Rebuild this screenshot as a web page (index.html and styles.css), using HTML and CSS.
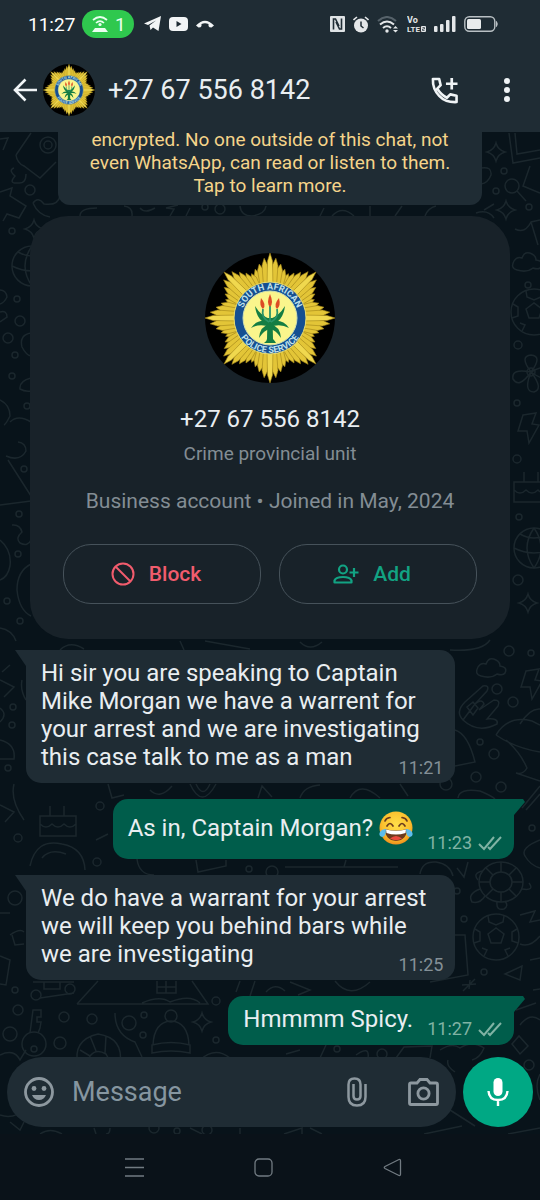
FILE: index.html
```html
<!DOCTYPE html>
<html lang="en">
<head>
<meta charset="utf-8">
<meta name="viewport" content="width=device-width, initial-scale=1">
<title>+27 67 556 8142</title>
<link rel="stylesheet" href="styles.css">
</head>
<body>
<svg class="defs" aria-hidden="true">
  <defs>
    <g id="point" fill="#e3c537" stroke="#a3861a" stroke-width=".6">
      <path transform="rotate(22.5)" d="M-3.400 -30 L-3 -43 L0 -48 L3 -43 L3.400 -30Z"/>
      <path transform="rotate(-16.9)" d="M-3.400 -30 L-2.900 -45 L0 -51 L2.900 -45 L3.400 -30Z"/>
      <path transform="rotate(16.9)" d="M-3.400 -30 L-2.900 -45 L0 -51 L2.900 -45 L3.400 -30Z"/>
      <path transform="rotate(-11.3)" d="M-3.400 -30 L-2.900 -49 L0 -55 L2.900 -49 L3.400 -30Z"/>
      <path transform="rotate(11.3)" d="M-3.400 -30 L-2.900 -49 L0 -55 L2.900 -49 L3.400 -30Z"/>
      <path transform="rotate(-5.6)" d="M-3.400 -30 L-2.800 -53 L0 -60 L2.800 -53 L3.400 -30Z"/>
      <path transform="rotate(5.6)" d="M-3.400 -30 L-2.800 -53 L0 -60 L2.800 -53 L3.400 -30Z"/>
      <path fill="#f0d84e" d="M-3 -30 L-2.500 -57 L0 -65 L2.500 -57 L3 -30Z"/>
    </g>
    <path id="arcTop" d="M-27 9 A28.500 28.500 0 1 1 27 9"/>
    <path id="arcBottom" d="M-35 0 A35 35 0 0 0 35 0"/>
    <symbol id="badge" viewBox="-65 -65 130 130">
      <circle r="65" fill="#000"/>
      <circle r="44" fill="#c9a92a"/>
      <use href="#point"/><use href="#point" transform="rotate(45)"/><use href="#point" transform="rotate(90)"/><use href="#point" transform="rotate(135)"/>
      <use href="#point" transform="rotate(180)"/><use href="#point" transform="rotate(225)"/><use href="#point" transform="rotate(270)"/><use href="#point" transform="rotate(315)"/>
      <circle r="36" fill="#154f91" stroke="#e8dc72" stroke-width="1"/>
      <circle r="27" fill="#faf58c" stroke="#cfe0b0" stroke-width="1"/>
      <g font-family="Roboto, sans-serif" font-weight="700" font-size="9" fill="#bfe0ea" text-anchor="middle">
        <text><textPath href="#arcTop" startOffset="50%">SOUTH AFRICAN</textPath></text>
        <text><textPath href="#arcBottom" startOffset="50%">POLICE SERVICE</textPath></text>
      </g>
      <g fill="#147d43">
        <path d="M-2.500 0 L2.500 0 L3 21 Q5 23 6 25 L-6 25 Q-3 23 -3 21Z"/>
        <path d="M-1 6 Q-13 4 -15 -12 Q-9 -2 0 1Z"/><path d="M1 6 Q13 4 15 -12 Q9 -2 0 1Z"/>
        <path d="M0 4 Q-12 0 -19 10 Q-10 5 0 9Z"/><path d="M0 4 Q12 0 19 10 Q10 5 0 9Z"/>
        <path d="M0 6 Q-10 8 -11 20 Q-6 12 0 11Z"/><path d="M0 6 Q10 8 11 20 Q6 12 0 11Z"/>
      </g>
      <path d="M0 4 V-12 M-1 4 Q-9 0 -7 -9 M1 4 Q9 0 7 -9" fill="none" stroke="#2a9468" stroke-width="1.800"/>
      <g fill="#dc4a24"><path d="M0 -24 Q4 -15 0 -11 Q-4 -15 0 -24Z"/><path d="M-9 -20 Q-3 -13 -7 -9 Q-11 -12 -9 -20Z"/><path d="M9 -20 Q3 -13 7 -9 Q11 -12 9 -20Z"/></g>
    </symbol>
    <symbol id="ticks" viewBox="0 0 24 16"><path d="M1 9 L6 14 L16 2 M10 12 L12 14 L23 2" fill="none" stroke="#80b3a4" stroke-width="2"/></symbol>
    <path id="spark" d="M0 -9 Q2 -2 9 0 Q2 2 0 9 Q-2 2 -9 0 Q-2 -2 0 -9Z"/>
    <path id="bolt" d="M-4 -13 L9 -15 L5 -4 L12 -3 L2 15 L0 3 L-9 3Z"/>
    <path id="cloud" d="M-10 8 Q-17 6 -13 -1 Q-10 -6 -5 -4 Q-2 -12 5 -8 Q9 -6 9 -2 Q17 -1 14 5 Q12 8 6 6 Q0 11 -10 8Z"/>
    <g id="ball"><circle r="23"/><path d="M-8 -3 L0 -9 L8 -3 L5 6 L-5 6Z M-8 -21 L-7 -15 L0 -12 L7 -15 L8 -21 M21 -8 L16 -5 L16 4 L22 6 M-21 -8 L-16 -5 L-16 4 L-22 6 M-12 19 L-9 13 L-14 11 M12 19 L9 13 L14 11"/></g>
    <g id="turtle"><ellipse rx="22" ry="20"/><ellipse rx="11" ry="10"/><path d="M0 -20 V-10 M0 20 V10 M-22 0 H-11 M22 0 H11 M-15 -14 L-8 -7 M15 14 L8 7 M15 -14 L8 -7 M-15 14 L-8 7 M-21 7 Q-34 12 -29 20 Q-21 22 -16 14 M21 7 Q34 9 28 1 M-18 -11 Q-29 -9 -23 -2 M-4 20 Q-5 29 3 27 Q8 24 4 19"/></g>
    <g id="planet"><circle r="20"/><path d="M-20 0 Q0 10 20 0 M-14 -14 Q0 -6 14 -14 M0 -20 Q-14 0 0 20 M0 -20 Q14 0 0 20"/></g>
    <g id="key"><circle cy="12" r="12"/><circle cy="17" r="3"/><path d="M-4 1 L-1 -22 H7 V-15 H3 L3 -10 H7 L6 -4 L4 1"/></g>
    <g id="hat"><path d="M-18 10 Q-17 -13 0 -14 Q17 -13 18 10 M-19 10 Q0 5 19 10 V18 Q0 14 -19 18Z"/><circle cy="-19" r="6"/></g>
    <g id="flower"><path d="M0 0 Q-12 -16 0 -17 Q12 -16 0 0 Q18 -10 19 2 Q17 12 0 0 Q13 17 3 20 Q-8 20 0 0 Q-12 17 -18 7 Q-20 -4 0 0"/><circle r="4"/></g>
    <g id="glass"><circle r="7"/><path d="M5 5 L14 15"/></g>
    <path id="hand" d="M-12 10 Q-20 2 -10 -8 L8 -24 Q15 -25 12 -19 L0 -6 M0 -6 Q7 -12 9 -6 L4 0 L19 -10 Q26 -10 23 -4 L12 9 Q24 8 22 14 Q3 24 -12 10Z M-8 -3 L-2 -8 L3 -2 L-2 5Z"/>
    <g id="cake"><path d="M-18 -4 H18 V16 H-18Z M-18 4 Q-12 10 -6 4 Q0 10 6 4 Q12 10 18 4 M-8 -4 V-14 M6 -4 V-14"/></g>
    <path id="croissant" d="M-20 16 Q-26 -10 0 -16 Q26 -12 22 14 Q12 14 8 4 Q-2 -2 -8 6 Q-10 16 -20 16Z M-18 0 L-8 6 M-8 -14 L-2 1 M8 -14 L7 3"/>
  </defs>
</svg>

<div class="screen">
  <header class="top">
    <div class="status">
      <div class="status-left">
        <span class="clock">11:27</span>
        <span class="hotspot">
          <svg width="18" height="18" viewBox="0 0 18 18" aria-hidden="true"><g fill="none" stroke="#eafff0" stroke-width="1.7"><path d="M2 5 Q9 -1 16 5"/><path d="M5 8 Q9 4 13 8"/></g><circle cx="9" cy="9.5" r="1.6" fill="#eafff0"/><path d="M4 13 H14 L17 17 H1Z" fill="#eafff0"/></svg>
          <span>1</span>
        </span>
        <svg class="ic-telegram" width="17" height="16" viewBox="0 0 17 16" aria-hidden="true"><path d="M0 7.500 L17 0 L14.500 15 L9 11.500 L6.500 14 L5.500 9.500 L12 4.500 L4 9Z" fill="#f2f5f6"/></svg>
        <svg class="ic-video" width="19" height="14" viewBox="0 0 19 14" aria-hidden="true"><rect width="19" height="14" rx="4" fill="#f2f5f6"/><path d="M7.500 4 L12.500 7 L7.500 10Z" fill="#1f2c34"/></svg>
        <svg class="ic-hang" width="18" height="9" viewBox="0 0 18 9" aria-hidden="true"><path d="M0 5.500 Q9 -4 18 5.500 L15.500 7.500 Q13 7.500 12.500 6 V4 Q9 2.500 5.500 4 V6 Q5 7.500 2.500 7.500Z" fill="#f2f5f6"/></svg>
      </div>
      <div class="status-right">
        <svg width="15" height="16" viewBox="0 0 15 16" aria-hidden="true"><rect width="15" height="16" rx="1" fill="#dfe3e5"/><path d="M3.500 13.500 V3 H5.500 L9 10 M11.500 2.500 V13 H9.500 L6 6" fill="none" stroke="#1f2c34" stroke-width="1.600"/></svg>
        <svg width="16" height="17" viewBox="0 0 16 17" aria-hidden="true"><circle cx="8" cy="9.500" r="7" fill="#e4e7e9"/><path d="M.5 4 L4 1 M15.500 4 L12 1" stroke="#e4e7e9" stroke-width="1.600"/><path d="M8 5.500 V10 L10.500 12" fill="none" stroke="#1f2c34" stroke-width="1.500"/></svg>
        <svg width="22" height="17" viewBox="0 0 22 17" aria-hidden="true"><g fill="none" stroke-width="2"><path d="M1 5 Q10 -3 19 5" stroke="#56626a"/><path d="M3 8.500 Q10 2.500 17 8.500 M6 12 Q10 8.500 14 12" stroke="#e4e7e9"/></g><circle cx="10" cy="15" r="1.700" fill="#e4e7e9"/><path d="M16 12.500 L18.500 10 L21 12.500Z M16 14 L18.500 16.500 L21 14Z" fill="#e4e7e9"/></svg>
        <svg width="19" height="17" viewBox="0 0 19 17" role="img" aria-label="VoLTE 2"><g font-family="Roboto, sans-serif" font-weight="700" font-size="9" fill="#e4e7e9"><text x="0" y="7">Vo</text><text x="0" y="16" font-size="8">LTE</text></g><rect x="14" y="10" width="5" height="6" rx="1" fill="#e4e7e9"/><path d="M15.500 11.500 H17.500 V13 H15.500 V14.500 H17.500" fill="none" stroke="#1f2c34" stroke-width=".7"/></svg>
        <svg width="22" height="16" viewBox="0 0 22 16" aria-hidden="true"><g fill="#e4e7e9"><rect y="10" width="3.500" height="6" rx="1"/><rect x="6" y="8" width="3.500" height="8" rx="1"/><rect x="12" y="4" width="3.500" height="12" rx="1"/><rect x="18" width="3.500" height="16" rx="1"/></g></svg>
        <svg width="34" height="16" viewBox="0 0 34 16" aria-hidden="true"><rect x=".8" y=".8" width="30" height="14.400" rx="4.500" fill="none" stroke="#b9c0c4" stroke-width="1.400"/><rect x="3" y="3" width="14" height="10" rx="1.500" fill="#e8ebec"/><path d="M32.500 5.500 Q34 8 32.500 10.500Z" fill="#b9c0c4" stroke="#b9c0c4"/></svg>
      </div>
    </div>
    <div class="bar">
      <button class="icon-btn" aria-label="Back"><svg width="24" height="24" viewBox="0 0 24 24"><path d="M24 12 H2 M12.500 1.500 L2 12 L12.500 22.500" fill="none" stroke="#f0f4f6" stroke-width="2.600"/></svg></button>
      <svg class="avatar-small" role="img" aria-label="Profile photo"><use href="#badge"/></svg>
      <h1 class="title">+27 67 556 8142</h1>
      <button class="icon-btn call" aria-label="Add call"><svg width="27" height="27" viewBox="0 0 28 28" fill="none" stroke="#f0f4f6"><path d="M2 2 H8.500 L10 8.500 L6.500 12 Q10 18 16.500 21.500 L20 18 L26.500 19.500 V26 Q15 26.500 8.500 19.500 Q1.500 12.500 2 2Z" stroke-width="2.700" stroke-linejoin="round"/><path d="M21.500 1 V13 M15.500 7 H27.500" stroke-width="2.800"/></svg></button>
      <button class="icon-btn" aria-label="More options"><svg width="6" height="24" viewBox="0 0 6 24" fill="#f0f4f6"><circle cx="3" cy="3" r="3"/><circle cx="3" cy="12" r="3"/><circle cx="3" cy="21" r="3"/></svg></button>
    </div>
  </header>

  <main class="chat">
    <svg class="wallpaper" viewBox="0 132 540 1002" preserveAspectRatio="xMidYMin slice" aria-hidden="true">
      <path d="M0 139 L8 138 L3 150 M16 155 L31 133 M16 155 Q17 163 24 166 L40 178 L56 162 M14 168 Q8 170 15 176 Q8 184 18 183 Q26 184 26 174 M0 192 L12 188 L10 196 L26 206 L19 218 L7 214 L3 221 M33 203 Q38 196 44 204 Q58 206 60 196 M33 203 Q38 215 50 217"/>
      <circle cx="48" cy="145" r="8"/><circle cx="48" cy="145" r="4"/><circle cx="30" cy="190" r="5"/><circle cx="12" cy="231" r="3"/>
      <use href="#spark" transform="translate(34 229)"/><use href="#planet" transform="translate(32 266)"/>
      <circle cx="17" cy="299" r="3"/><circle cx="20" cy="321" r="5"/><circle cx="8" cy="338" r="5"/><circle cx="15" cy="355" r="3"/><circle cx="12" cy="376" r="3"/><circle cx="27" cy="406" r="3"/><circle cx="24" cy="469" r="3"/><circle cx="19" cy="514" r="3"/><circle cx="18" cy="554" r="3"/><circle cx="7" cy="601" r="3"/><circle cx="20" cy="621" r="3"/>
      <path d="M0 290 Q6 290 7 297 Q4 303 0 304 M0 312 Q7 310 7 317 L0 322 M31 333 Q19 335 22 347 Q26 355 31 356 M31 378 Q19 381 20 389 Q25 392 31 391 M0 400 Q10 405 10 416 Q6 424 4 425 M10 422 Q18 414 31 422 M18 442 Q26 443 26 451 Q20 462 6 456 M8 460 L31 496 M0 505 L31 501 M12 525 Q20 524 22 532 Q15 538 20 543 Q28 547 31 540 M0 540 Q12 550 10 566 Q8 577 0 580 M31 564 Q17 571 17 590 Q19 610 31 616 M0 628 Q12 630 16 641"/>
      <use href="#spark" transform="translate(496 152)"/><circle cx="504" cy="171" r="3"/><use href="#glass" transform="translate(512 186)"/><circle cx="496" cy="191" r="3"/><use href="#spark" transform="translate(506 210)"/><circle cx="529" cy="207" r="3"/>
      <path d="M509 133 L513 163 L540 158 M515 133 L517 154 L540 150 M530 166 L523 186 L540 193 M481 168 Q492 166 491 175 Q488 183 481 184 M515 229 Q525 234 531 222 L540 220 M531 222 L538 245 M484 210 L494 204 M476 213 Q488 209 494 218"/>
      <path d="M80 216 Q80 208 97 208 M124 206 Q133 207 132 216 M140 208 Q145 214 155 208 M170 216 L174 209 L166 208 L178 205 M190 208 L186 216 M240 206 Q241 216 252 216 Q265 214 266 206 M320 216 L324 208 M332 216 Q342 205 354 216 M370 206 V216 M395 216 L402 206 M425 216 Q428 208 436 206"/>
      <circle cx="220" cy="209" r="5"/><circle cx="205" cy="207" r="3"/>
      <use href="#cloud" transform="translate(527 262)"/><use href="#ball" transform="translate(534 312)"/><circle cx="518" cy="345" r="4"/><circle cx="528" cy="285" r="3"/><use href="#flower" transform="translate(531 372)"/><circle cx="517" cy="403" r="3"/><use href="#bolt" transform="translate(527 428)"/><circle cx="517" cy="459" r="4"/><use href="#cake" transform="translate(532 486)"/><circle cx="519" cy="517" r="3"/><use href="#planet" transform="translate(534 548)"/><circle cx="518" cy="580" r="5"/><use href="#spark" transform="translate(528 603)"/><circle cx="509" cy="651" r="5"/><circle cx="531" cy="653" r="3"/>
      <path d="M10 665 L2 672 M0 680 L14 687 L4 697 M0 708 Q8 714 0 722 M26 700 Q20 690 22 680 M0 740 Q16 744 14 759 H0 M450 650 Q482 652 490 640 M180 641 L184 650 M205 641 L250 649 M300 642 Q310 652 322 642 M60 650 Q70 640 84 649"/>
      <circle cx="13" cy="707" r="3"/><circle cx="12" cy="725" r="3"/><circle cx="8" cy="768" r="3"/>
      <use href="#cloud" transform="translate(491 668)"/><use href="#bolt" transform="translate(530 684)"/><circle cx="497" cy="689" r="5"/><circle cx="513" cy="702" r="5"/><use href="#hand" transform="translate(475 710)"/>
      <path d="M496 735 Q508 715 532 721 L540 725 M496 735 Q515 748 540 752 M506 740 Q520 752 527 768 Q523 775 516 773 M516 773 L540 781 M455 730 Q468 734 475 762 L455 766 M520 724 Q530 708 540 709 M458 798 Q459 788 480 791 Q492 796 495 799 M522 808 L540 786 M526 810 L540 794 M540 840 Q520 848 525 856 Q530 865 540 868"/>
      <circle cx="480" cy="742" r="3"/><circle cx="494" cy="754" r="5"/><circle cx="476" cy="777" r="5"/><circle cx="501" cy="787" r="5"/><circle cx="446" cy="784" r="6"/><circle cx="532" cy="828" r="3"/>
      <path d="M14 784 Q10 800 24 820 M108 784 L112 798 L124 795 M150 790 Q160 800 172 786 M190 784 Q202 810 216 784 M196 784 Q203 799 210 784 M258 798 L262 786 L272 797 M300 798 Q304 786 320 785 M350 798 Q360 780 380 798 M400 784 L408 796 M0 805 L14 812 L5 822"/>
      <use href="#cake" transform="translate(58 820)"/><circle cx="100" cy="806" r="4"/><circle cx="18" cy="838" r="4"/><path d="M30 866 Q36 838 62 844 Q84 848 85 870 M42 858 Q50 848 66 854 M96 840 L108 834"/><circle cx="97" cy="862" r="4"/><circle cx="15" cy="898" r="7"/>
      <path d="M137 859 Q139 875 154 875 M196 860 L198 872 L226 866 V860 M285 867 H398 M346 860 L344 867 M420 874 Q422 861 436 862 Q450 864 453 876 M457 868 L464 877 L468 862"/><circle cx="249" cy="869" r="3"/><circle cx="272" cy="872" r="6"/>
      <use href="#turtle" transform="translate(501 882)"/><use href="#ball" transform="translate(496 937)"/><circle cx="464" cy="919" r="3"/><circle cx="457" cy="891" r="3"/>
      <path d="M520 915 L535 911 L530 922 L540 920 M520 944 Q530 948 540 936 M454 935 H465 L468 975 L430 982 M0 913 H10 M10 935 Q20 928 24 932 M12 935 L15 945 L24 944 M0 956 L10 960 L6 985 L0 984 M505 974 L522 966 L520 980Z"/>
      <circle cx="484" cy="972" r="3"/><path d="M470 980 L469 989 M462 985 L476 984 M463 991 L475 979 M530 960 L540 958 M533 990 L540 989"/>
      <g><circle cx="36" cy="995" r="5"/><circle cx="70" cy="989" r="5"/><path d="M33 982 H74 M40 998 L74 993 M44 982 V989 H60 V982"/></g>
      <path d="M77 1004 L98 981 M77 1004 H208 L192 981 M142 1003 Q160 995 170 1002 Q190 994 200 1003 M157 981 V993 H176 V981 M166 981 V993 M157 987 H176 M240 981 L236 992 M255 981 L250 996 M266 992 Q275 982 285 991 M290 982 L310 990 L298 995 M335 981 Q350 1000 370 982"/>
      <circle cx="15" cy="990" r="3"/><circle cx="18" cy="1010" r="5"/><circle cx="64" cy="1017" r="5"/><circle cx="92" cy="1019" r="5"/><circle cx="129" cy="1023" r="7"/><circle cx="144" cy="1015" r="3"/><circle cx="143" cy="1035" r="3"/><circle cx="216" cy="1001" r="4"/><circle cx="216" cy="1040" r="3"/><circle cx="10" cy="1034" r="7"/><circle cx="60" cy="1043" r="6"/>
      <use href="#key" transform="translate(34 1032)"/><use href="#hat" transform="translate(171 1035)"/><use href="#spark" transform="translate(202 1022)"/><use href="#croissant" transform="translate(98 1050)"/>
      <path d="M115 1013 Q115 1035 135 1042 L142 1057 M200 1060 Q215 1046 230 1058 M0 1055 Q14 1048 20 1060 L26 1050 M0 1115 Q14 1120 26 1108 M10 1122 L20 1130 L24 1122 M40 1134 Q50 1127 62 1134 M94 1128 L96 1134 M110 1128 Q110 1134 106 1134 M190 1128 L202 1134 M240 1128 V1134 M310 1128 L322 1134 M284 1134 L302 1128 L302 1134 M424 1134 L462 1126 M508 1134 L540 1128 M450 1110 L475 1126"/>
      <circle cx="154" cy="1128" r="5"/><circle cx="177" cy="1131" r="3"/><circle cx="207" cy="1130" r="5"/>
      <path d="M286 1054 L300 1050 M320 1058 L326 1045 M356 1055 Q370 1045 368 1058 M396 1058 L404 1047 L432 1046 L430 1058 M440 1050 Q452 1042 460 1048 Q472 1040 484 1048 Q480 1058 472 1060 M455 1072 Q446 1066 448 1060 M512 1044 L519 1036 L528 1046 L520 1054Z M540 1074 Q534 1085 540 1100"/><circle cx="337" cy="1049" r="3"/><circle cx="382" cy="1054" r="5"/><circle cx="529" cy="1065" r="5"/><path d="M516 1010 L536 1003 M520 1025 Q530 1012 540 1020"/>
    </svg>

    <p class="notice">encrypted. No one outside of this chat, not even WhatsApp, can read or listen to them. Tap to learn more.</p>

    <section class="card">
      <svg class="avatar-large" role="img" aria-label="South African Police Service badge"><use href="#badge"/></svg>
      <h2 class="card-name">+27 67 556 8142</h2>
      <p class="card-role">Crime provincial unit</p>
      <p class="card-info">Business account • Joined in May, 2024</p>
      <div class="card-actions">
        <button class="pill block"><svg width="24" height="24" viewBox="0 0 24 24" fill="none" stroke="currentColor" stroke-width="2"><circle cx="12" cy="12" r="10.500"/><path d="M4.500 4.500 L19.500 19.500"/></svg>Block</button>
        <button class="pill add"><svg width="26" height="20" viewBox="0 0 26 20" fill="none" stroke="currentColor" stroke-width="2.200"><circle cx="10" cy="5.500" r="4"/><path d="M1.500 18.500 V16.500 Q3 13 10 13 Q17 13 18.500 16.500 V18.500Z" stroke-linejoin="round"/><path d="M21 4 V13 M16.500 8.500 H25.500"/></svg>Add</button>
      </div>
    </section>

    <div class="messages">
      <article class="msg in wide">
        <p>Hi sir you are speaking to Captain<br>Mike Morgan we have a warrent for<br>your arrest and we are investigating<br>this case talk to me as a man</p>
        <div class="meta"><time>11:21</time></div>
      </article>
      <article class="msg out">
        <p class="with-emoji">As in, Captain Morgan?
          <svg width="34" height="34" viewBox="0 0 34 34" role="img" aria-label="Face with tears of joy"><defs><radialGradient id="face" cx="50%" cy="40%" r="60%"><stop offset="0" stop-color="#ffdf4a"/><stop offset=".7" stop-color="#fbc02d"/><stop offset="1" stop-color="#ee8f1c"/></radialGradient></defs><circle cx="17" cy="17" r="16.500" fill="url(#face)"/><path d="M6 18 Q17 21 28 18 Q28 29 17 30 Q6 29 6 18Z" fill="#6b3a1d"/><path d="M7 18.500 Q17 21 27 18.500 L26.500 22 Q17 25 7.500 22Z" fill="#fff"/><path d="M11 27.500 Q17 22.500 23 27.500 Q17 31 11 27.500Z" fill="#ea4a3d"/><path d="M8 15 Q11 10 14 15 M20 15 Q23 10 26 15 M6 10 Q7 7 11 6.500 M28 10 Q27 7 23 6.500" fill="none" stroke="#6b3a1d" stroke-width="1.700" stroke-linecap="round"/><path d="M7 18 Q7 26 3 26 Q-1 25 1 21 Q3 18 7 18Z M27 18 Q27 26 31 26 Q35 25 33 21 Q31 18 27 18Z" fill="#5dbcec"/></svg></p>
        <div class="meta"><time>11:23</time><svg width="24" height="16" role="img" aria-label="Delivered"><use href="#ticks"/></svg></div>
      </article>
      <article class="msg in wide">
        <p>We do have a warrant for your arrest<br>we will keep you behind bars while<br>we are investigating</p>
        <div class="meta"><time>11:25</time></div>
      </article>
      <article class="msg out">
        <p>Hmmmm Spicy.</p>
        <div class="meta"><time>11:27</time><svg width="24" height="16" role="img" aria-label="Delivered"><use href="#ticks"/></svg></div>
      </article>
    </div>

    <form class="composer">
      <div class="field">
        <button type="button" class="icon-btn" aria-label="Emoji"><svg width="30" height="30" viewBox="0 0 30 30"><circle cx="15" cy="15" r="13.500" fill="none" stroke="#8d989f" stroke-width="2.800"/><circle cx="10" cy="11.500" r="2.400" fill="#8d989f"/><circle cx="20" cy="11.500" r="2.400" fill="#8d989f"/><path d="M8 18 H22 Q20 23 15 23 Q10 23 8 18Z" fill="#8d989f"/></svg></button>
        <input type="text" placeholder="Message" aria-label="Message">
        <button type="button" class="icon-btn" aria-label="Attach"><svg width="20" height="30" viewBox="0 0 20 30"><path d="M18.500 7 V20 Q18.500 28.500 10 28.500 Q1.500 28.500 1.500 20 V7.500 Q1.500 1.500 7.500 1.500 Q13.500 1.500 13.500 7.500 V19 Q13.500 22.500 10 22.500 Q6.500 22.500 6.500 19 V7" fill="none" stroke="#8d989f" stroke-width="2.500"/></svg></button>
        <button type="button" class="icon-btn camera" aria-label="Camera"><svg width="31" height="28" viewBox="0 0 31 28" fill="none" stroke="#8d989f" stroke-width="2.800"><path d="M3 5 H9 L12 1.500 H19 L22 5 H28 Q29.500 5 29.500 6.500 V25 Q29.500 26.500 28 26.500 H3 Q1.500 26.500 1.500 25 V6.500 Q1.500 5 3 5Z"/><circle cx="15.500" cy="15.500" r="5.600"/></svg></button>
      </div>
      <button type="button" class="mic" aria-label="Record voice message"><svg width="22" height="30" viewBox="0 0 22 30"><rect x="6.500" y="1" width="9" height="18" rx="4.500" fill="#fff"/><path d="M1.500 14 Q2 23 11 23 Q20 23 20.500 14 M11 23 V29" fill="none" stroke="#fff" stroke-width="2.400"/></svg></button>
    </form>
  </main>

  <nav class="sysnav">
    <button aria-label="Recent apps"><svg width="19" height="19" viewBox="0 0 19 19"><path d="M0 1 H19 M0 9.500 H19 M0 18 H19" stroke="#727b82" stroke-width="1.300"/></svg></button>
    <button aria-label="Home"><svg width="19" height="19" viewBox="0 0 19 19"><rect x="1" y="1" width="17" height="17" rx="4" fill="none" stroke="#727b82" stroke-width="1.300"/></svg></button>
    <button aria-label="Back"><svg width="19" height="19" viewBox="0 0 19 19"><path d="M16 1.500 Q17.500 1 17.500 3 V16 Q17.500 18 16 17.500 L2 10.500 Q.5 9.500 2 8.500Z" fill="none" stroke="#727b82" stroke-width="1.300"/></svg></button>
  </nav>
</div>
</body>
</html>
```

FILE: styles.css
```css
* { box-sizing: border-box; }

body {
  margin: 0;
  background: #0a1219;
  color: #e9eef1;
  font-family: Roboto, "Noto Sans", sans-serif;
}

h1, h2, p { margin: 0; font-weight: 400; }
svg { display: block; flex: none; }
button { border: 0; background: none; padding: 0; font: inherit; color: inherit; cursor: pointer; }

.defs { position: absolute; width: 0; height: 0; }

.screen { display: flex; flex-direction: column; min-height: 100vh; }

/* Header */
.top { background: #1f2c34; position: relative; z-index: 1; }

.status {
  display: flex;
  justify-content: space-between;
  align-items: center;
  height: 48px;
  padding: 0 42px 0 28px;
}
.status-left, .status-right { display: flex; align-items: center; }
.status-right { gap: 8px; }
.clock { font-size: 19px; color: #fff; margin-right: 7px; }
.hotspot {
  display: flex;
  align-items: center;
  justify-content: center;
  gap: 6px;
  width: 52px;
  height: 28px;
  border-radius: 14px;
  background: #2fc84e;
  color: #eafff0;
  font-size: 19px;
}
.ic-telegram { margin-left: 10px; }
.ic-video { margin-left: 8px; }
.ic-hang { margin-left: 8px; }

.bar {
  display: flex;
  align-items: center;
  height: 84px;
  padding: 0 30px 0 13px;
}
.icon-btn { display: flex; align-items: center; justify-content: center; }
.avatar-small { width: 52px; height: 52px; margin-left: 6px; }
.title { flex: 1; margin-left: 13px; font-size: 27px; line-height: 32px; }
.call { margin-right: 46px; }

/* Conversation */
.chat {
  position: relative;
  display: flex;
  flex-direction: column;
  background: #08131a;
  padding-bottom: 7px;
}
.wallpaper {
  position: absolute;
  inset: 0;
  width: 100%;
  height: 100%;
  fill: none;
  stroke: #1b272d;
  stroke-width: 1.5;
}
.notice, .card, .messages, .composer { position: relative; }

.notice {
  margin: -4px 58px 0;
  padding: 0 24px 8px;
  border-radius: 0 0 12px 12px;
  background: #1f2c34;
  color: #f5d48a;
  font-size: 19px;
  line-height: 23px;
  text-align: center;
}

.card {
  display: flex;
  flex-direction: column;
  align-items: center;
  margin: 11px 30px 0;
  padding: 37px 33px 35px;
  border-radius: 38px;
  background: #182229;
}
.avatar-large { width: 130px; height: 130px; }
.card-name { margin-top: 20px; font-size: 24px; line-height: 32px; }
.card-role { margin-top: 7px; font-size: 19px; line-height: 24px; color: #838d94; }
.card-info { margin-top: 21px; font-size: 21px; line-height: 28px; color: #838d94; }
.card-actions { display: flex; gap: 18px; width: 100%; margin-top: 29px; }
.pill {
  flex: 1;
  display: flex;
  align-items: center;
  justify-content: center;
  gap: 14px;
  height: 60px;
  padding-right: 12px;
  border: 1px solid #46525a;
  border-radius: 28px;
  font-size: 21px;
  font-weight: 500;
}
.block { color: #f15c6d; }
.add { color: #12a383; }

.messages {
  display: flex;
  flex-direction: column;
  align-items: flex-start;
  gap: 16px;
  margin-top: 11px;
  padding: 0 26px;
}
.msg {
  position: relative;
  display: flex;
  justify-content: space-between;
  gap: 14px;
  padding: 9px 12px 12px 15px;
  border-radius: 15px;
  font-size: 24px;
  line-height: 28px;
}
.msg p { white-space: nowrap; }
.msg::before {
  content: "";
  position: absolute;
  top: 0;
  width: 26px;
  height: 16px;
}
.in { background: #1f2c34; }
.in::before { left: -11px; background: #1f2c34; clip-path: polygon(0 0, 100% 0, 100% 100%, 11px 100%); }
.out { align-self: flex-end; background: #005d4b; }
.out::before { right: -11px; background: #005d4b; clip-path: polygon(0 0, 24px 0, 26px 3px, 15px 100%, 0 100%); }
.wide { width: 88%; }
.wide .meta { position: absolute; right: 12px; bottom: 5px; }
.with-emoji { display: flex; align-items: center; gap: 6px; min-height: 39px; }
.meta {
  display: flex;
  align-items: center;
  align-self: flex-end;
  gap: 6px;
  margin-bottom: -6px;
  font-size: 18px;
  line-height: 20px;
  color: #849097;
}
.wide .meta { margin-bottom: 0; }
.out .meta { color: #80b3a4; }

.composer { display: flex; gap: 7px; margin-top: 12px; padding: 0 7px; }
.field {
  flex: 1;
  display: flex;
  align-items: center;
  min-width: 0;
  height: 70px;
  padding: 0 17px;
  border-radius: 35px;
  background: #1f2c34;
}
.field input {
  flex: 1;
  min-width: 0;
  margin-left: 18px;
  border: 0;
  padding: 0;
  outline: 0;
  background: none;
  color: #e9eef1;
  font: inherit;
  font-size: 27px;
}
.field input::placeholder { color: #8696a0; opacity: 1; }
.camera { margin-left: 41px; }
.mic {
  display: flex;
  align-items: center;
  justify-content: center;
  width: 70px;
  height: 70px;
  border-radius: 50%;
  background: #00a884;
}

/* System navigation */
.sysnav {
  flex: 1;
  display: flex;
  justify-content: center;
  align-items: center;
  gap: 110px;
  min-height: 66px;
  padding-right: 14px;
  background: #0a1219;
}
```
